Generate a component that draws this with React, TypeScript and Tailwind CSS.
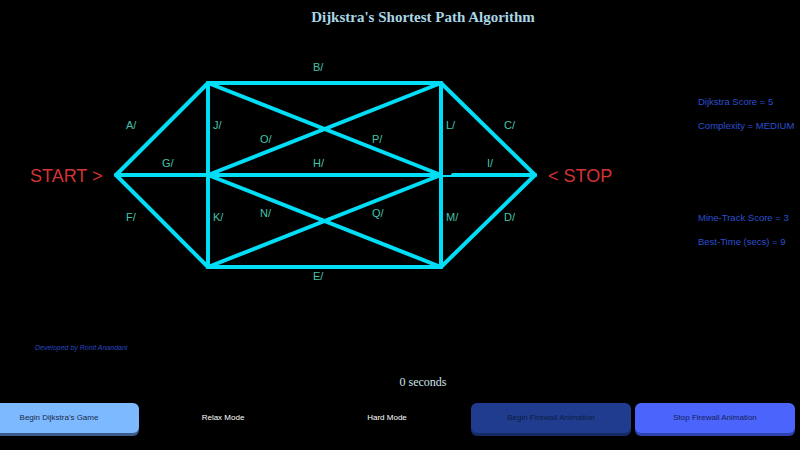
import React from "react";

const LINE = "#00def7";
const LBL = "#45c4ad";

const labels: [string, number, number][] = [
  ["B/", 313, 36],
  ["A/", 126, 94],
  ["J/", 213, 94],
  ["O/", 260, 108],
  ["P/", 372, 108],
  ["L/", 446, 94],
  ["C/", 504, 94],
  ["G/", 162, 132],
  ["H/", 313, 132],
  ["I/", 487, 132],
  ["F/", 126, 186],
  ["K/", 213, 186],
  ["N/", 260, 182],
  ["Q/", 372, 182],
  ["M/", 446, 186],
  ["D/", 504, 186],
  ["E/", 313, 245],
];

const L = [116, 140];
const TL = [208, 48];
const TR = [441, 48];
const R = [535, 140];
const BL = [208, 232];
const BR = [441, 232];
const ML = [208, 140];
const MR = [441, 140];

const edges: number[][][] = [
  [L, TL],
  [L, BL],
  [L, ML],
  [ML, MR],
  [TL, TR],
  [BL, BR],
  [TR, R],
  [BR, R],
  [TL, ML],
  [ML, BL],
  [TR, MR],
  [MR, BR],
  [TL, MR],
  [ML, TR],
  [ML, BR],
  [BL, MR],
];

export default function App() {
  return (
    <div
      className="w-[800px] h-[450px] bg-black overflow-hidden flex flex-col"
      style={{ fontFamily: '"Liberation Sans", Arial, sans-serif' }}
    >
      <div className="h-[35px] flex justify-center pl-[46px]">
        <h1
          className="mt-[7px] text-[15px] leading-[20px] font-bold text-[#a9d6e5]"
          style={{ fontFamily: '"Liberation Serif", "Times New Roman", serif' }}
        >
          Dijkstra's Shortest Path Algorithm
        </h1>
      </div>
      <div className="h-[265px] flex">
        <svg width="680" height="265" viewBox="0 0 680 265" className="shrink-0">
          {edges.map((e, i) => (
            <line
              key={i}
              x1={e[0][0]}
              y1={e[0][1]}
              x2={e[1][0]}
              y2={e[1][1]}
              stroke={LINE}
              strokeWidth={4}
              strokeLinecap="round"
            />
          ))}
          <line x1={441} y1={141} x2={454} y2={141} stroke={LINE} strokeWidth={2} />
          <line x1={453} y1={140} x2={535} y2={140} stroke={LINE} strokeWidth={4} strokeLinecap="round" />
          {labels.map(([t, x, y]) => (
            <text key={t} x={x} y={y} fill={LBL} fontSize={11} fontFamily='"Liberation Sans", Arial, sans-serif'>
              {t}
            </text>
          ))}
          <text x={30} y={147} fill="#d33333" fontSize={18} fontFamily='"Liberation Sans", Arial, sans-serif'>
            START &gt;
          </text>
          <text x={548} y={147} fill="#d33333" fontSize={18} fontFamily='"Liberation Sans", Arial, sans-serif'>
            &lt; STOP
          </text>
        </svg>
        <div className="ml-[18px] pt-[60px] flex flex-col text-[9.5px] leading-[14px] text-[#2d4fd0] whitespace-nowrap">
          <div>Dijkstra Score = 5</div>
          <div className="mt-[10px]">Complexity = MEDIUM</div>
          <div className="mt-[78px]">Mine-Track Score = 3</div>
          <div className="mt-[10px]">Best-Time (secs) = 9</div>
        </div>
      </div>
      <div className="pt-[42px] pl-[35px] h-[54px]">
        <div className="text-[7px] leading-[12px] italic text-[#2a45c0]">Developed by Ronit Anandani</div>
      </div>
      <div className="mt-[20px] h-[16px] flex justify-center pl-[46px]">
        <div
          className="text-[12px] leading-[16px] text-[#cfe3ec]"
          style={{ fontFamily: '"Liberation Serif", "Times New Roman", serif' }}
        >
          0 seconds
        </div>
      </div>
      <div className="mt-[13px] flex gap-[4px] ml-[-21px]">
        <button className="w-[160px] h-[30px] shrink-0 rounded-[6px] bg-[#7cb9ff] shadow-[0_3px_0_#3b5b8c] text-[8px] text-[#1b2a4a]">
          Begin Dijkstra's Game
        </button>
        <button className="w-[160px] h-[30px] shrink-0 text-[8px] text-white">Relax Mode</button>
        <button className="w-[160px] h-[30px] shrink-0 text-[8px] text-white">Hard Mode</button>
        <button className="w-[160px] h-[30px] shrink-0 rounded-[6px] bg-[#1f3c8e] shadow-[0_3px_0_#142a66] text-[8px] text-[#0e1c45]">
          Begin Firewall Animation
        </button>
        <button className="w-[160px] h-[30px] shrink-0 rounded-[6px] bg-[#4b64fb] shadow-[0_3px_0_#2e43b0] text-[8px] text-[#16225a]">
          Stop Firewall Animation
        </button>
      </div>
    </div>
  );
}
